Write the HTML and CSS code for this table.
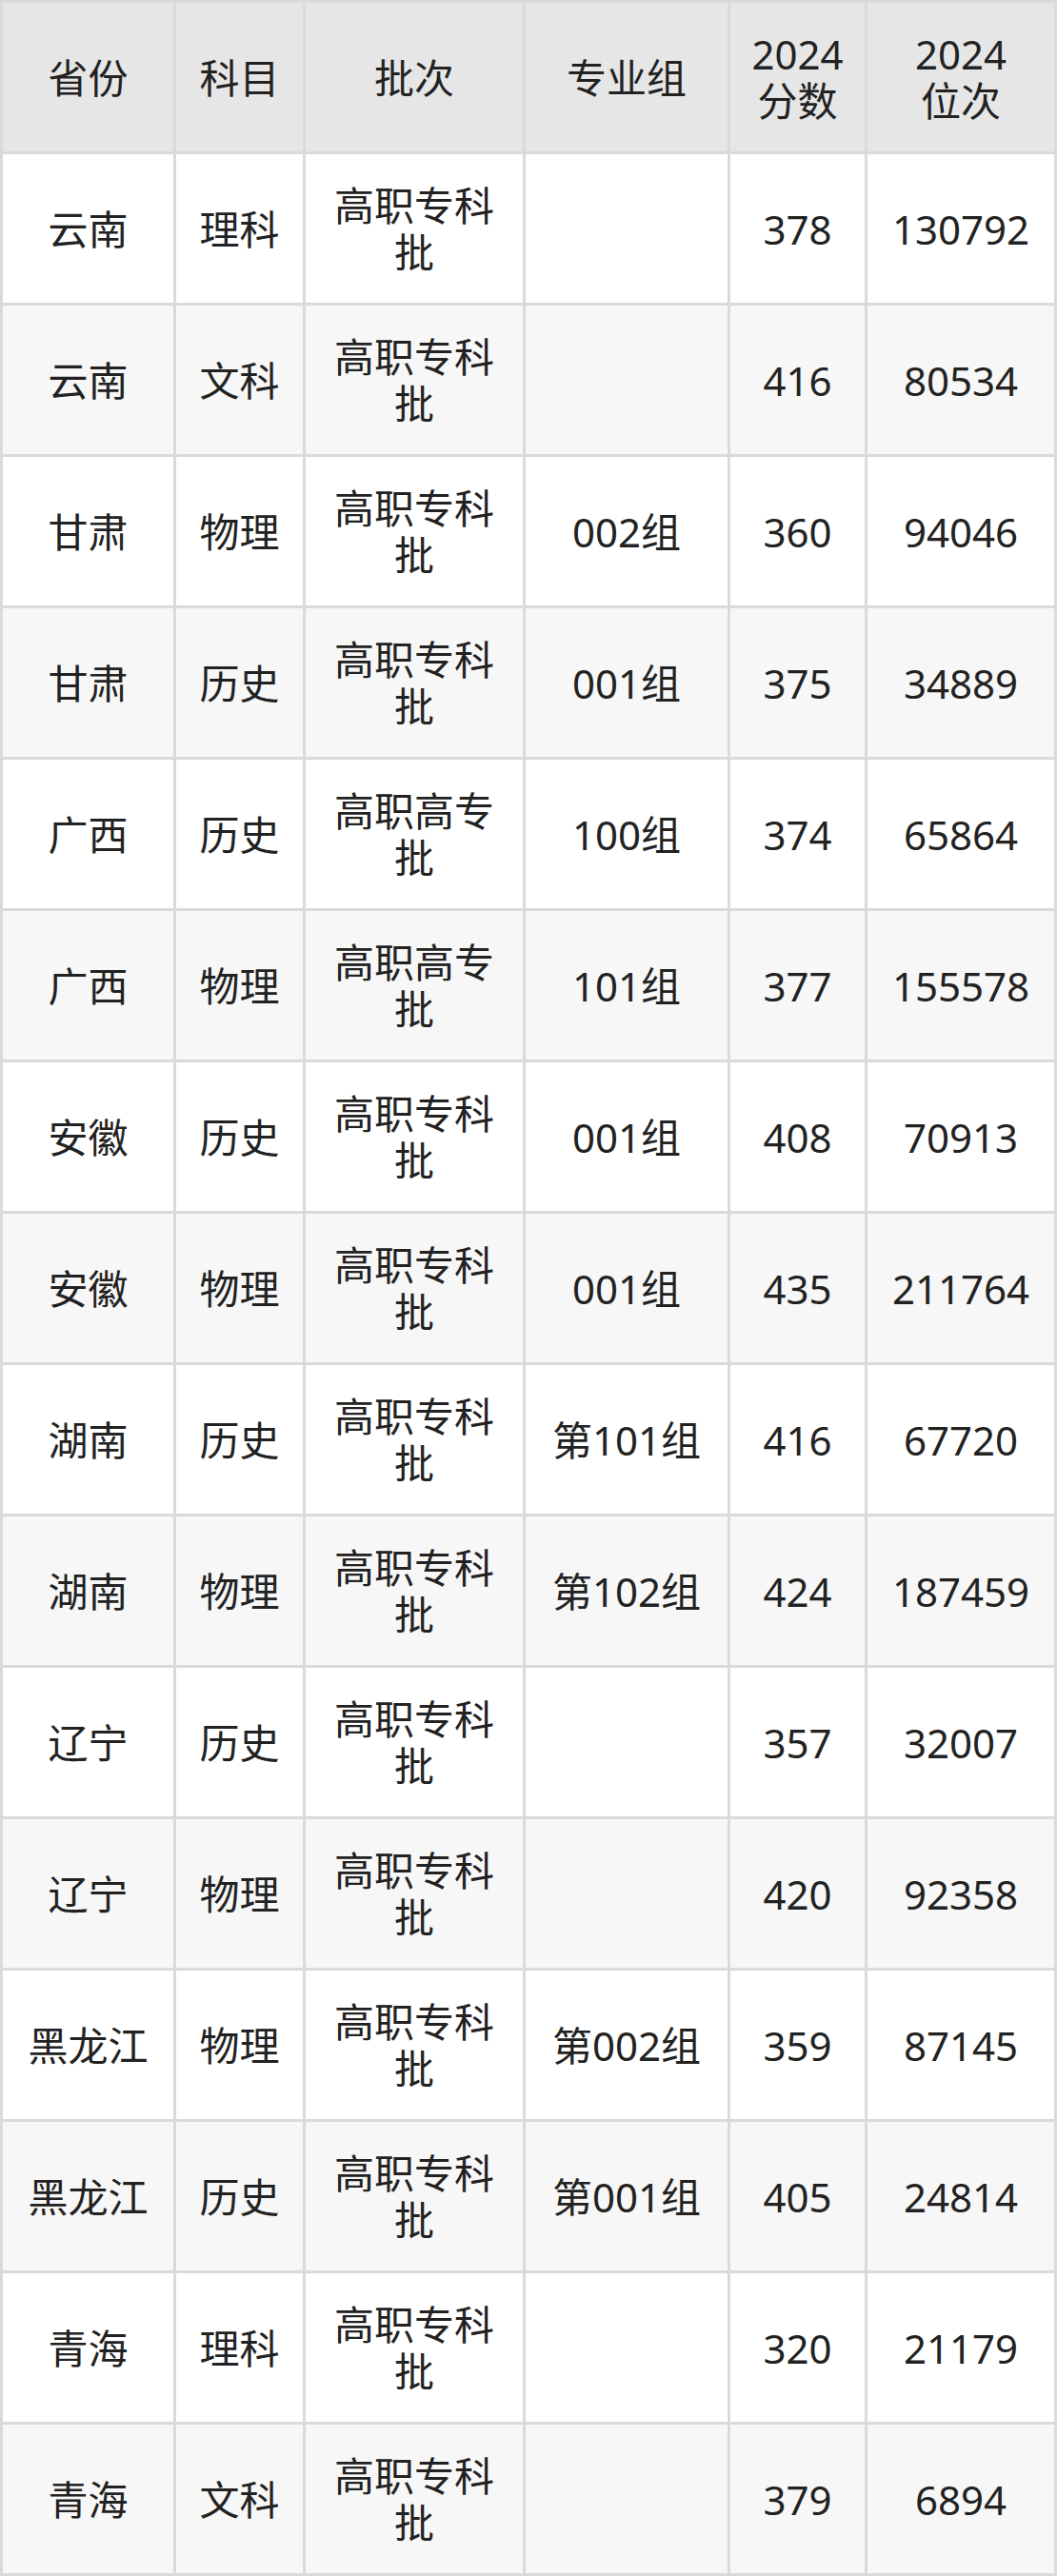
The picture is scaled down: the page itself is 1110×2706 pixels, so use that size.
FILE: index.html
```html
<!DOCTYPE html>
<html lang="zh-CN">
<head>
<meta charset="utf-8">
<link rel="stylesheet" href="styles.css">
</head>
<body>
<table class="score-table">
  <colgroup>
    <col class="c1"><col class="c2"><col class="c3"><col class="c4"><col class="c5"><col class="c6">
  </colgroup>
  <thead>
    <tr><th>省份</th><th>科目</th><th>批次</th><th>专业组</th><th>2024<br>分数</th><th>2024<br>位次</th></tr>
  </thead>
  <tbody>
    <tr><td>云南</td><td>理科</td><td>高职专科批</td><td></td><td>378</td><td>130792</td></tr>
    <tr><td>云南</td><td>文科</td><td>高职专科批</td><td></td><td>416</td><td>80534</td></tr>
    <tr><td>甘肃</td><td>物理</td><td>高职专科批</td><td>002组</td><td>360</td><td>94046</td></tr>
    <tr><td>甘肃</td><td>历史</td><td>高职专科批</td><td>001组</td><td>375</td><td>34889</td></tr>
    <tr><td>广西</td><td>历史</td><td>高职高专批</td><td>100组</td><td>374</td><td>65864</td></tr>
    <tr><td>广西</td><td>物理</td><td>高职高专批</td><td>101组</td><td>377</td><td>155578</td></tr>
    <tr><td>安徽</td><td>历史</td><td>高职专科批</td><td>001组</td><td>408</td><td>70913</td></tr>
    <tr><td>安徽</td><td>物理</td><td>高职专科批</td><td>001组</td><td>435</td><td>211764</td></tr>
    <tr><td>湖南</td><td>历史</td><td>高职专科批</td><td>第101组</td><td>416</td><td>67720</td></tr>
    <tr><td>湖南</td><td>物理</td><td>高职专科批</td><td>第102组</td><td>424</td><td>187459</td></tr>
    <tr><td>辽宁</td><td>历史</td><td>高职专科批</td><td></td><td>357</td><td>32007</td></tr>
    <tr><td>辽宁</td><td>物理</td><td>高职专科批</td><td></td><td>420</td><td>92358</td></tr>
    <tr><td>黑龙江</td><td>物理</td><td>高职专科批</td><td>第002组</td><td>359</td><td>87145</td></tr>
    <tr><td>黑龙江</td><td>历史</td><td>高职专科批</td><td>第001组</td><td>405</td><td>24814</td></tr>
    <tr><td>青海</td><td>理科</td><td>高职专科批</td><td></td><td>320</td><td>21179</td></tr>
    <tr><td>青海</td><td>文科</td><td>高职专科批</td><td></td><td>379</td><td>6894</td></tr>
  </tbody>
</table>
</body>
</html>
```
FILE: styles.css
```css
html, body {
  margin: 0;
  padding: 0;
  background: #ffffff;
}

.score-table {
  width: 1110px;
  table-layout: fixed;
  border-collapse: separate;
  border-spacing: 3px;
  background: #dadada;
  font-family: "Noto Sans", "Noto Sans CJK SC", sans-serif;
  font-size: 42px;
  line-height: 49px;
  color: #222222;
}

.c1 { width: 179px; }
.c2 { width: 133px; }
.c3 { width: 228px; }
.c4 { width: 212px; }
.c5 { width: 141px; }
.c6 { width: 196px; }

.score-table th,
.score-table td {
  height: 156px;
  padding: 0 14px;
  text-align: center;
  vertical-align: middle;
  font-weight: 400;
  box-sizing: border-box;
}

.score-table th {
  background: #e6e6e6;
}

.score-table tbody tr:nth-child(odd) td {
  background: #ffffff;
}

.score-table tbody tr:nth-child(even) td {
  background: #f7f7f7;
}
```
